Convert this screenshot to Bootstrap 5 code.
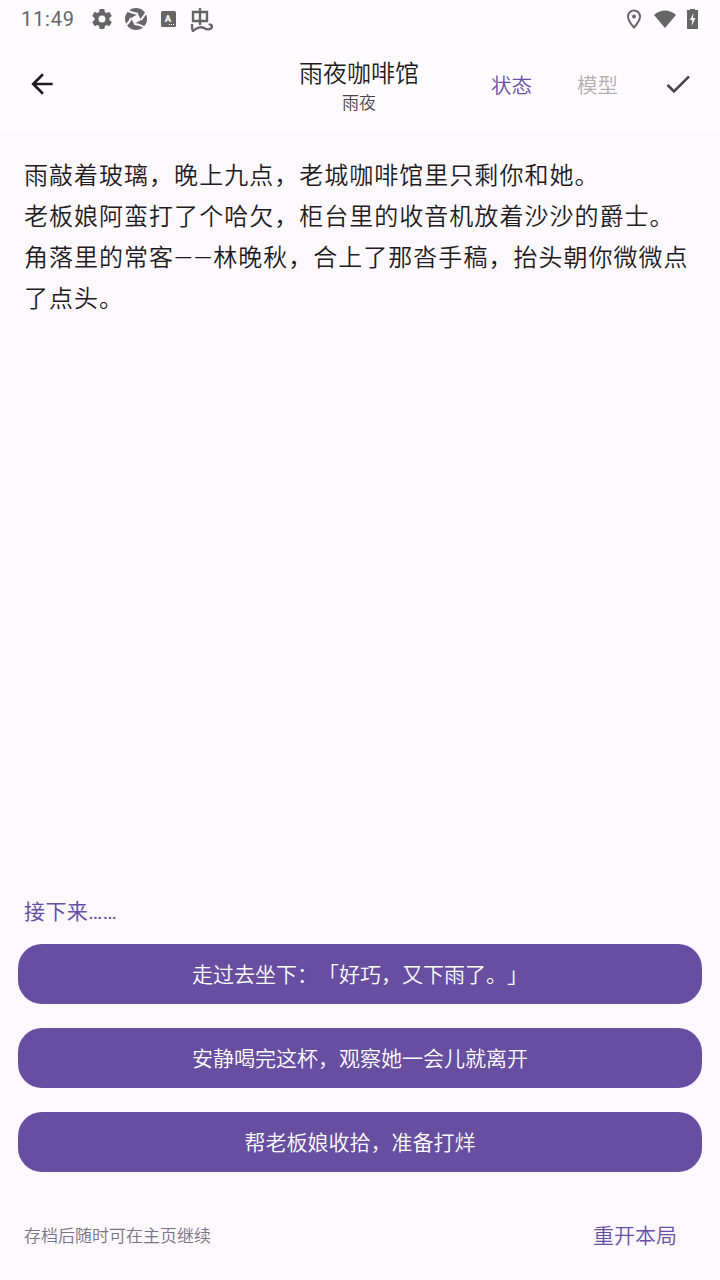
<!DOCTYPE html>
<html lang="zh-CN">
<head>
<meta charset="UTF-8">
<title>雨夜咖啡馆</title>
<link href="https://cdn.jsdelivr.net/npm/bootstrap@5.3.0/dist/css/bootstrap.min.css" rel="stylesheet">
<style>
    html, body { height: 100%; }
    body { background: #fdf8fe; font-family: Roboto, "Noto Sans CJK SC", sans-serif; font-weight: 350; color: #1d1b20; text-spacing-trim: space-all; }
    .screen { height: 1280px; }
    .status-row { height: 38px; padding: 0 22px 0 21px; color: #666; background: #fffbff; }
    .clock { font-size: 20px; font-weight: 400; letter-spacing: .8px; line-height: 1; width: 69px; }
    .status-left svg + svg { margin-left: 10px; }
    .status-left .ico-a { margin-left: 13px !important; }
    .status-left .ico-bug { margin-left: 14px !important; }
    .status-right .ico-wifi { margin-left: 13px; }
    .status-right .ico-batt { margin-left: 11px; }
    .app-bar { height: 94px; background: #fffbff; padding: 0 26px 2px 16px; }
    .app-back { width: 52px; height: 52px; }
    .head-title { margin-left: 231px; width: 120px; padding-top: 2px; }
    .title-main { font-size: 24px; line-height: 32px; }
    .title-sub { font-size: 17px; line-height: 20px; margin-top: 3px; color: #49454f; }
    .tab-word { font-size: 20.5px; line-height: 28px; width: 41px; white-space: nowrap; padding-top: 3px; height: 31px; }
    .tab-on { color: #6750a4; }
    .tab-off { color: #b0aeb3; margin-left: 45px; margin-right: 44px; }
    .story { padding: 24px 24px 0 24px; font-size: 24px; line-height: 41px; letter-spacing: 1.02px; }
    .next-label { color: #6750a4; font-size: 21px; font-weight: 400; letter-spacing: .4px; line-height: 28px; padding-left: 24px; margin-bottom: 18px; }
    .choice-list { padding: 0 18px; }
    .choice-btn { background: #674ea1; border: 0; border-radius: 24px; height: 60px; color: #fff; font-size: 21px; font-weight: 350; padding-top: 9px; }
    .choice-btn:hover { background: #674ea1; color: #fff; }
    .foot-row { height: 108px; padding: 21px 43px 0 24px; }
    .foot-note { font-size: 17px; color: #79747e; }
    .foot-link { font-size: 21px; color: #6750a4; }
</style>
</head>
<body>
<div class="screen d-flex flex-column">
    <div class="status-row d-flex align-items-center">
        <span class="clock">11:49</span>
        <div class="status-left d-flex align-items-center">
            <svg width="24" height="24" viewBox="0 0 24 24" fill="#666"><path d="M19.4 13c.04-.3.06-.65.06-1s-.02-.7-.07-1l2.100-1.650c.2-.15.24-.42.12-.64l-2-3.460c-.12-.22-.37-.29-.6-.22l-2.500 1c-.52-.4-1.080-.73-1.700-.98l-.37-2.650A.5.5 0 0 0 14 2h-4a.5.5 0 0 0-.5.42l-.37 2.650c-.62.25-1.180.59-1.700.98l-2.500-1c-.22-.08-.47 0-.6.22l-2 3.460c-.12.22-.07.49.12.64L4.570 11c-.05.32-.07.66-.07 1s.02.7.07 1l-2.100 1.650c-.2.15-.24.42-.12.64l2 3.460c.12.22.37.29.6.22l2.500-1c.52.4 1.080.73 1.700.98l.37 2.650c.05.24.25.42.5.42h4c.25 0 .45-.18.5-.42l.37-2.650c.62-.25 1.180-.59 1.700-.98l2.500 1c.22.08.47 0 .6-.22l2-3.460c.12-.22.07-.49-.12-.64L19.400 13zM12 15.500a3.500 3.500 0 1 1 0-7 3.500 3.500 0 0 1 0 7z"/></svg>
            <svg width="24" height="24" viewBox="0 0 24 24"><circle cx="12" cy="12" r="11" fill="#666"/><path d="M7 11 14 7 17 13 10 17z" fill="#fffbff"/><path d="M14 7Q9 6 4 4M17 13Q19 10 22 6M10 17Q15 17 20 20M7 11Q6 15 2 18" fill="none" stroke="#fffbff" stroke-width="2"/></svg>
            <svg class="ico-a" width="15" height="16" viewBox="0 0 15 16"><rect width="15" height="16" rx="1.500" fill="#666"/><text x="7" y="10.500" font-family="Roboto" font-size="9.500" font-weight="700" fill="#fff" text-anchor="middle">A</text><path d="M8 13.500h1M10 13.500h1M12 13.500h1" stroke="#fff"/></svg>
            <svg class="ico-bug" width="23" height="25" viewBox="0 0 23 25" fill="none" stroke="#666" stroke-width="2.400"><path d="M3 5h14v9H3zM10 1v17M2 17C2 20 2 23 3 24 6 21 11 19 14 21 17 23 21 23 22 20 22 18 20 17 19 18"/></svg>
        </div>
        <div class="status-right d-flex align-items-center ms-auto">
            <svg width="14" height="20" viewBox="0 0 14 20" fill="none" stroke="#666" stroke-width="2"><path d="M7 18.500C3 14 1 11 1 7.500a6 6 0 0 1 12 0c0 3.500-2 6.500-6 11z"/><circle cx="7" cy="7.500" r="2" fill="#666" stroke="none"/></svg>
            <svg class="ico-wifi" width="22" height="18" viewBox="0 0 22 18" fill="#666"><path d="M0 5C3 2 7 .5 11 .5S19 2 22 5L11 18z"/></svg>
            <svg class="ico-batt" width="11" height="20" viewBox="0 0 11 20"><path d="M3 1V0h5v1h3v19H0V1z" fill="#666"/><path d="M6.500 4 3 11h2.300L4.500 17 8.500 9H6z" fill="#fff"/></svg>
        </div>
    </div>
    <div class="app-bar d-flex align-items-center">
        <div class="app-back d-flex align-items-center justify-content-center">
            <svg width="32" height="32" viewBox="0 0 24 24" fill="#1d1b20"><path d="M20 11H7.830l5.590-5.590L12 4l-8 8 8 8 1.410-1.410L7.830 13H20z"/></svg>
        </div>
        <div class="text-center flex-shrink-0 head-title">
            <div class="title-main">雨夜咖啡馆</div>
            <div class="title-sub">雨夜</div>
        </div>
        <div class="d-flex align-items-center ms-auto">
            <span class="tab-word tab-on">状态</span>
            <span class="tab-word tab-off">模型</span>
            <svg width="32" height="32" viewBox="0 0 24 24" fill="#49454f"><path d="M9 16.170 4.830 12l-1.420 1.410L9 19 21 7l-1.410-1.410z"/></svg>
        </div>
    </div>
    <div class="story flex-grow-1">
        雨敲着玻璃，晚上九点，老城咖啡馆里只剩你和她。<br>
        老板娘阿蛮打了个哈欠，柜台里的收音机放着沙沙的爵士。<br>
        角落里的常客——林晚秋，合上了那沓手稿，抬头朝你微微点了点头。
    </div>
    <div class="next-label">接下来……</div>
    <div class="choice-list d-flex flex-column gap-4">
        <button type="button" class="btn choice-btn w-100">走过去坐下：「好巧，又下雨了。」</button>
        <button type="button" class="btn choice-btn w-100">安静喝完这杯，观察她一会儿就离开</button>
        <button type="button" class="btn choice-btn w-100">帮老板娘收拾，准备打烊</button>
    </div>
    <div class="foot-row d-flex align-items-center justify-content-between">
        <span class="foot-note">存档后随时可在主页继续</span>
        <span class="foot-link">重开本局</span>
    </div>
</div>
<script src="https://cdn.jsdelivr.net/npm/bootstrap@5.3.0/dist/js/bootstrap.bundle.min.js"></script>
</body>
</html>
